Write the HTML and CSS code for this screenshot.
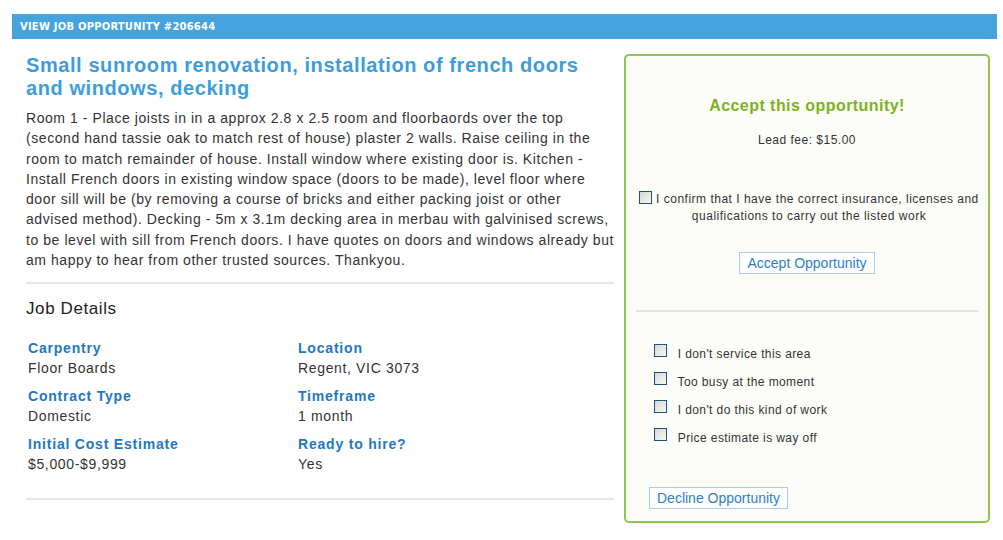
FILE: index.html
```html
<!DOCTYPE html>
<html lang="en">
<head>
    <title>View job opportunity #206644</title>
    <meta http-equiv="content-type" content="text/html;charset=UTF-8" />
    <link rel="stylesheet" href="styles.css">
</head>
    <body>
        <div class="page">
            <div class="page-header">View job opportunity #206644</div>
            <div class="page-body">
                <div class="job">
                    <h1 class="job-title">Small sunroom renovation, installation of french doors and windows, decking</h1>
                    <p class="job-description">Room 1 - Place joists in in a approx 2.8 x 2.5 room and floorbaords over the top (second hand tassie oak to match rest of house) plaster 2 walls. Raise ceiling in the room to match remainder of house. Install window where existing door is. Kitchen - Install French doors in existing window space (doors to be made), level floor where door sill will be (by removing a course of bricks and either packing joist or other advised method). Decking - 5m x 3.1m decking area in merbau with galvinised screws, to be level with sill from French doors. I have quotes on doors and windows already but am happy to hear from other trusted sources. Thankyou.</p>
                    <div class="job-details">
                        <h2>Job Details</h2>
                        <dl class="details">
                            <div class="detail">
                                <dt>Carpentry</dt>
                                <dd>Floor Boards</dd>
                            </div>
                            <div class="detail">
                                <dt>Location</dt>
                                <dd>Regent, VIC 3073</dd>
                            </div>
                            <div class="detail">
                                <dt>Contract Type</dt>
                                <dd>Domestic</dd>
                            </div>
                            <div class="detail">
                                <dt>Timeframe</dt>
                                <dd>1 month</dd>
                            </div>
                            <div class="detail">
                                <dt>Initial Cost Estimate</dt>
                                <dd>$5,000-$9,999</dd>
                            </div>
                            <div class="detail">
                                <dt>Ready to hire?</dt>
                                <dd>Yes</dd>
                            </div>
                        </dl>
                    </div>
                </div>

                <div class="opportunity">
                    <div class="accept">
                        <h3 class="accept-title">Accept this opportunity!</h3>
                        <p class="lead-fee">Lead fee: $15.00</p>
                        <label class="confirm">
                            <input type="checkbox" class="check">
                            I confirm that I have the correct insurance, licenses and qualifications to carry out the listed work
                        </label>
                        <button class="action">Accept Opportunity</button>
                    </div>
                    <div class="decline">
                        <ul class="reasons">
                            <li><label><input type="checkbox" class="check"> I don't service this area</label></li>
                            <li><label><input type="checkbox" class="check"> Too busy at the moment</label></li>
                            <li><label><input type="checkbox" class="check"> I don't do this kind of work</label></li>
                            <li><label><input type="checkbox" class="check"> Price estimate is way off</label></li>
                        </ul>
                        <button class="action">Decline Opportunity</button>
                    </div>
                </div>
            </div>
        </div>
    </body>
</html>
```

FILE: styles.css
```css
body {
    margin: 0;
    font-family: "Liberation Sans", Arial, sans-serif;
    color: #333;
    background: #fff;
}

.page {
    padding: 14px 6px 0 12px;
}

.page-header {
    height: 25px;
    line-height: 25px;
    padding: 0 8px;
    background: #45a3de;
    color: #fff;
    font-family: "DejaVu Sans", Verdana, sans-serif;
    font-size: 10px;
    font-weight: bold;
    letter-spacing: 0.2px;
    text-transform: uppercase;
}

.page-body {
    display: flex;
    gap: 10px;
    padding: 15px 0 0 14px;
}

.job {
    width: 588px;
}

.job-title {
    margin: 0;
    font-size: 20px;
    line-height: 23px;
    letter-spacing: 0.58px;
    color: #3d9ddb;
}

.job-description {
    margin: 8px 0 0 0;
    font-size: 14px;
    line-height: 20.3px;
    letter-spacing: 0.56px;
    color: #333;
    padding-bottom: 12px;
    border-bottom: 2px solid #e6e6e6;
}

.job-details {
    padding: 15px 0 24px 0;
    border-bottom: 2px solid #e6e6e6;
}

.job-details h2 {
    margin: 0;
    font-size: 17px;
    line-height: 20px;
    letter-spacing: 0.6px;
    font-weight: normal;
    color: #222;
}

.details {
    display: grid;
    grid-template-columns: 270px 270px;
    row-gap: 8px;
    margin: 19px 0 0 2px;
}

.detail dt {
    font-size: 14px;
    line-height: 20px;
    letter-spacing: 0.8px;
    font-weight: bold;
    color: #1f78c4;
}

.detail dd {
    margin: 0;
    font-size: 14px;
    line-height: 20px;
    letter-spacing: 0.65px;
    color: #333;
}

.opportunity {
    width: 362px;
    height: 465px;
    border: 2px solid #8cc84b;
    border-radius: 5px;
    background: #fcfdf9;
}

.accept {
    margin: 0 10px;
    padding-top: 40px;
    height: 214px;
    text-align: center;
    border-bottom: 2px solid #dfe3dc;
}

.accept-title {
    margin: 0;
    font-size: 16px;
    line-height: 20px;
    letter-spacing: 0.45px;
    color: #7bb31c;
}

.lead-fee {
    margin: 17px 0 0 0;
    font-size: 12px;
    line-height: 14px;
    letter-spacing: 0.5px;
    color: #333;
}

.confirm {
    display: block;
    margin: 44px -8px 0 -4px;
    font-size: 12px;
    line-height: 17px;
    letter-spacing: 0.5px;
    color: #333;
}

.check {
    appearance: none;
    -webkit-appearance: none;
    width: 13px;
    height: 13px;
    margin: 0 4px 0 0;
    vertical-align: -1px;
    border: 1px solid #1f5183;
    background: linear-gradient(135deg, #d7d7d2, #f7f7f4);
}

.confirm .check {
    margin-right: 0;
}

.action {
    display: block;
    margin: 27px auto 0 auto;
    padding: 0 7px;
    height: 22px;
    font-family: "Liberation Sans", Arial, sans-serif;
    font-size: 14px;
    color: #2d7ec8;
    background: #fff;
    border: 1px solid #aecde9;
}

.decline {
    padding: 28px 10px 0 23px;
}

.reasons {
    list-style: none;
    margin: 0;
    padding: 0 0 0 5px;
}

.reasons li {
    font-size: 12px;
    line-height: 28px;
    letter-spacing: 0.4px;
    color: #333;
}

.reasons .check {
    margin-right: 7px;
    vertical-align: 1px;
}

.decline .action {
    margin: 35px 0 0 0;
}
```
